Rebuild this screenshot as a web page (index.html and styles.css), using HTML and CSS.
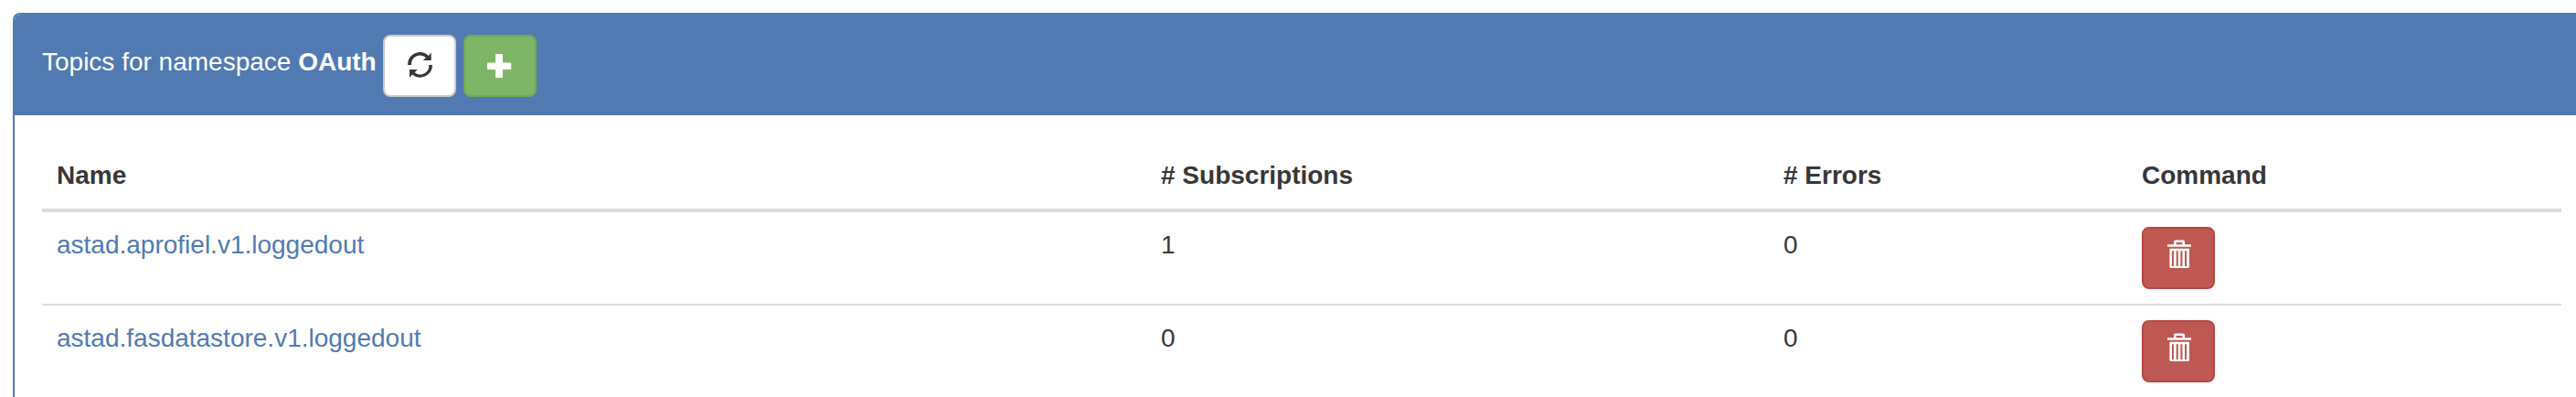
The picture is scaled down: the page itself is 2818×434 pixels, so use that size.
FILE: index.html
```html
<!DOCTYPE html>
<html lang="en">
<head>
<meta charset="utf-8">
<title>Topics</title>
<link rel="stylesheet" href="styles.css">
</head>
<body>
<svg class="sprite" aria-hidden="true">
  <symbol id="trash" viewBox="0 0 28 34">
    <path fill-rule="evenodd" d="M9 5.2V2.3Q9 .5 10.8 .5H19.2Q21 .5 21 2.3V5.2H28V7.8H2V5.2ZM11.6 5.2H18.4V3H11.6ZM4.4 9.7H26V29.4Q26 31 24.4 31H6Q4.4 31 4.4 29.4ZM7 12.3V29H9V12.3ZM11.7 12.3V29H13.8V12.3ZM16.4 12.3V29H18.5V12.3ZM21 12.3V29H23V12.3Z"/>
  </symbol>
</svg>
<section class="panel">
  <header class="panel-heading">
    <span class="title">Topics for namespace <b>OAuth</b></span>
    <button class="btn btn-default" aria-label="Refresh"><svg class="icon" viewBox="0 0 28 34"><path d="M1 19A13.5 13.5 0 0 1 23.8 8.9L26.7 5.5V14H17.7L21 11.1A9.6 9.6 0 0 0 5 19ZM28 19A13.5 13.5 0 0 1 5.9 29.5L3 32.8V24H11.7L8.6 27.3A9.6 9.6 0 0 0 24.2 19Z"/></svg></button>
    <button class="btn btn-success" aria-label="Add"><svg class="icon" viewBox="0 0 28 34"><path d="M9.8 7H16.2Q17 7 17 7.8V16.6H25.4Q26.2 16.6 26.2 17.4V23.2Q26.2 24 25.4 24H17V32.2Q17 33 16.2 33H9.8Q9 33 9 32.2V24H.8Q0 24 0 23.2V17.4Q0 16.6 .8 16.6H9V7.8Q9 7 9.8 7Z"/></svg></button>
  </header>
  <div class="panel-body">
    <table class="table">
      <colgroup><col class="col-name"><col class="col-subs"><col class="col-errors"><col></colgroup>
      <thead>
        <tr><th>Name</th><th># Subscriptions</th><th># Errors</th><th>Command</th></tr>
      </thead>
      <tbody>
        <tr><td><a class="link">astad.aprofiel.v1.loggedout</a></td><td>1</td><td>0</td><td><button class="btn btn-danger" aria-label="Delete"><svg class="icon"><use href="#trash"/></svg></button></td></tr>
        <tr><td><a class="link">astad.fasdatastore.v1.loggedout</a></td><td>0</td><td>0</td><td><button class="btn btn-danger" aria-label="Delete"><svg class="icon"><use href="#trash"/></svg></button></td></tr>
      </tbody>
    </table>
  </div>
</section>
</body>
</html>
```
FILE: styles.css
```css
* { box-sizing: border-box; }
html { overflow: hidden; }
body {
  margin: 0;
  padding: 14px 0 0 14px;
  height: 434px;
  overflow: hidden;
  background: #fff;
  color: #373737;
  font: 28px/40px "Liberation Sans", Arial, sans-serif;
}
.sprite { display: none; }
.panel {
  height: 420px;
  border: 2px solid #517ab2;
  border-width: 2px 0 0 2px;
  border-radius: 8px 0 0 0;
}
.panel-heading {
  display: flex;
  align-items: flex-start;
  gap: 8px;
  height: 110px;
  padding: 22px 30px 0;
  border-radius: 6px 0 0 0;
  background: #517ab2;
  color: #fff;
}
.title {
  width: 365px;
  padding-top: 10px;
  white-space: nowrap;
}
.panel-body { padding: 30px 16px 0 30px; }
.table {
  width: 100%;
  table-layout: fixed;
  border-collapse: separate;
  border-spacing: 0;
}
.col-name { width: 1208px; }
.col-subs { width: 681px; }
.col-errors { width: 392px; }
.table th, .table td {
  padding: 16px;
  text-align: left;
  vertical-align: top;
}
.table th { border-bottom: 4px solid #dcdcdc; }
.table tbody tr + tr td { border-top: 2px solid #dcdcdc; }
.link { color: #517ab2; }
.btn {
  display: flex;
  width: 80px;
  height: 68px;
  padding: 12px 24px;
  border: 2px solid;
  border-radius: 8px;
  font: inherit;
}
.icon {
  display: block;
  width: 28px;
  height: 34px;
  flex: none;
  fill: currentColor;
}
.btn-default { background: #fff; border-color: #cbcbcb; color: #373737; }
.btn-success { background: #7fb566; border-color: #72aa56; color: #fff; }
.btn-danger { background: #be5852; border-color: #b74640; color: #fff; }
```
